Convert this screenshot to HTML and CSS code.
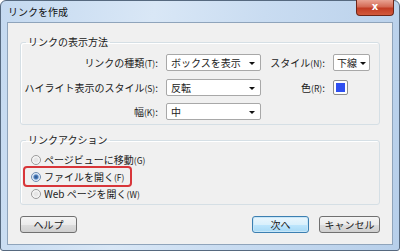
FILE: index.html
```html
<!DOCTYPE html>
<html lang="ja">
<head>
    <meta charset="UTF-8">
    <title>リンクを作成</title>
    <link rel="stylesheet" href="styles.css">
</head>
<body>
    <div class="window">
        <div class="titlebar">
            <span class="title">リンクを作成</span>
            <div class="close">x</div>
        </div>
        <div class="client">
            <fieldset class="group">
                <legend>リンクの表示方法</legend>
                <div class="form-grid">
                    <div class="label">リンクの種類<small>(T)</small>:</div>
                    <div class="select">ボックスを表示<span class="arrow"></span></div>
                    <div class="label">スタイル<small>(N)</small>:</div>
                    <div class="select short">下線<span class="arrow"></span></div>

                    <div class="label">ハイライト表示のスタイル<small>(S)</small>:</div>
                    <div class="select">反転<span class="arrow"></span></div>
                    <div class="label">色<small>(R)</small>:</div>
                    <div class="swatch"><span></span></div>

                    <div class="label">幅<small>(K)</small>:</div>
                    <div class="select">中<span class="arrow"></span></div>
                </div>
            </fieldset>

            <fieldset class="group action">
                <legend>リンクアクション</legend>
                <div class="radios">
                    <div class="radio-row"><span class="radio"></span>ページビューに移動<small>(G)</small></div>
                    <div class="radio-row highlight"><span class="radio checked"></span>ファイルを開く<small>(F)</small></div>
                    <div class="radio-row"><span class="radio"></span>Web ページを開く<small>(W)</small></div>
                </div>
            </fieldset>

            <div class="buttons">
                <div class="btn help">ヘルプ</div>
                <div class="spacer"></div>
                <div class="btn default">次へ</div>
                <div class="btn cancel">キャンセル</div>
            </div>
        </div>
    </div>
</body>
</html>
```

FILE: styles.css
```css
body {
    margin: 0;
    font-family: "Noto Sans CJK JP", "Noto Sans", sans-serif;
    font-size: 10px;
    color: #1a1a1a;
}
.window {
    width: 400px;
    height: 251px;
    box-sizing: border-box;
    border: 1px solid #56697f;
    border-radius: 6px 6px 3px 3px;
    background: linear-gradient(100deg, #c4d9f0 0%, #d9e7f6 35%, #c9dcf1 60%, #b7cfea 100%);
    display: flex;
    flex-direction: column;
}
.titlebar {
    height: 21px;
    position: relative;
    display: flex;
    align-items: center;
    padding-left: 7px;
}
.title {
    font-size: 10px;
    color: #111;
    line-height: 12px;
}
.close {
    position: absolute;
    top: -1px;
    right: 5px;
    width: 36px;
    height: 15px;
    border: 1px solid #6e2618;
    border-top: none;
    border-radius: 0 0 4px 4px;
    background: linear-gradient(#e9a393 0%, #d46a55 45%, #c23c24 55%, #d25a3c 100%);
    color: #fff;
    font-family: "DejaVu Sans", sans-serif;
    font-weight: bold;
    font-size: 10px;
    line-height: 14px;
    text-align: center;
}
.client {
    margin: 0 6px 5px 6px;
    flex: 1;
    border: 1px solid #8fa4bb;
    background: #f0f0f0;
    padding: 13px 12px 0 12px;
}
.group {
    margin: 0;
    padding: 0;
    border: 1px solid #d5dfe5;
    border-radius: 3px;
    box-shadow: inset 1px 1px 0 #fff;
}
.group legend {
    margin-left: 5px;
    padding: 0 2px;
    line-height: 12px;
    font-size: 10px;
}
.action {
    margin-top: 9px;
}
small {
    font-size: 8.5px;
}
.form-grid {
    display: grid;
    grid-template-columns: 137px 95px 56px 37px;
    grid-auto-rows: 17px;
    column-gap: 8px;
    row-gap: 7.5px;
    padding: 6px 0 4px 0;
    align-items: center;
}
.label {
    text-align: right;
    white-space: nowrap;
}
.select {
    position: relative;
    height: 17px;
    box-sizing: border-box;
    border: 1px solid #a8a8a8;
    border-radius: 2px;
    background: #fff;
    padding-left: 4px;
    line-height: 15px;
}
.select.short {
    padding-left: 3px;
}
.arrow {
    position: absolute;
    right: 5px;
    top: 7px;
    border-left: 3px solid transparent;
    border-right: 3px solid transparent;
    border-top: 3px solid #111;
}
.short .arrow {
    right: 3px;
}
.swatch {
    width: 15px;
    height: 15px;
    box-sizing: border-box;
    border: 1px solid #8d8d8d;
    border-radius: 2px;
    background: #fdfdfd;
    padding: 2px;
}
.swatch span {
    display: block;
    width: 100%;
    height: 100%;
    background: #2f4ff0;
}
.radios {
    padding: 5px 0 2px 10px;
}
.radio-row {
    height: 17px;
    display: flex;
    align-items: center;
    white-space: nowrap;
}
.radio {
    width: 8px;
    height: 8px;
    border: 1px solid #9a9a9a;
    border-radius: 50%;
    background: radial-gradient(circle, #e6e6e6 30%, #fbfbfb 70%);
    margin-right: 3px;
}
.radio.checked {
    background: radial-gradient(circle, #2a4f7e 0%, #4c7fc0 35%, #d5e3f3 55%, #fafafa 80%);
    border-color: #6f8db2;
}
.highlight {
    width: fit-content;
    border: 2px solid #d8363a;
    border-radius: 4px;
    margin: -2px 0 -2px -8px;
    padding: 0 6px;
}
.buttons {
    display: flex;
    margin-top: 11px;
}
.spacer {
    flex: 1;
}
.btn {
    height: 17px;
    box-sizing: border-box;
    border: 1px solid #707070;
    border-radius: 3px;
    background: linear-gradient(#f4f4f4 0%, #ebebeb 50%, #dddddd 51%, #cfcfcf 100%);
    text-align: center;
    line-height: 15px;
}
.help {
    width: 57px;
}
.default {
    width: 57px;
    border-color: #3c7fb1;
    background: linear-gradient(#eaf6fd 0%, #d9f0fc 50%, #bee6fd 51%, #a7d9f5 100%);
    box-shadow: inset 0 0 0 1px #c8e6f7;
}
.cancel {
    width: 61px;
    margin-left: 10px;
}
```
